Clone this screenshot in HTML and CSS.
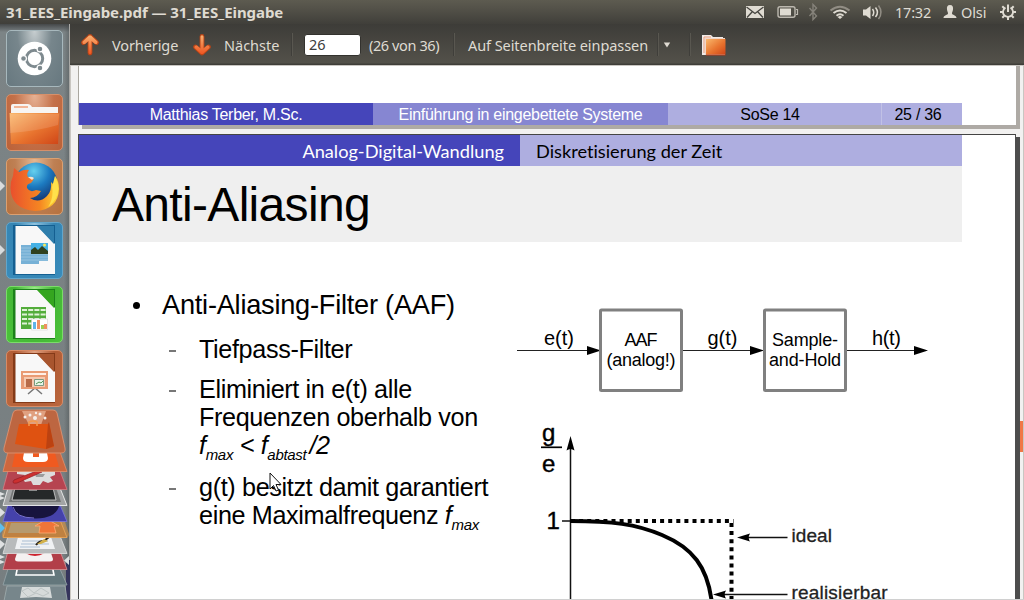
FILE: index.html
```html
<!DOCTYPE html>
<html lang="de">
<head>
<meta charset="utf-8">
<title>31_EES_Eingabe.pdf — 31_EES_Eingabe</title>
<link rel="stylesheet" href="styles.css">
</head>
<body>
<header class="panel">
  <span class="panel-title">31_EES_Eingabe.pdf — 31_EES_Eingabe</span>
  <svg class="tray" width="164" height="24" viewBox="740 0 164 24">
    <rect x="746" y="6" width="18" height="12" fill="#dfdbd2"/>
    <path d="M746.5 7l8.500 6.500L763.500 7M747 17.500l5.500-6M763 17.500l-5.500-6" fill="none" stroke="#45443f" stroke-width="1.300"/>
    <rect x="778" y="6.700" width="17" height="10.600" rx="2" fill="none" stroke="#bcb8af" stroke-width="1.400"/>
    <rect x="780" y="8.500" width="11" height="7" fill="#dfdbd2"/>
    <path d="M796 9.500h1.500v5H796" fill="none" stroke="#bcb8af" stroke-width="1.200"/>
    <path d="M809.500 8l7 8-3.500 3.500v-15l3.500 3.500-7 8" fill="none" stroke="#85827a" stroke-width="1.400"/>
    <g fill="none" stroke-width="2">
      <path d="M830.500 10.500q9.500-7.500 19 0" stroke="#918d84"/>
      <path d="M833.500 13q6.500-5 13 0M836.500 15.700q3.500-2.800 7 0" stroke="#dfdbd2"/>
    </g>
    <path d="M837.500 17l2.500-1.300 2.500 1.300-2.500 2z" fill="#dfdbd2"/>
    <path d="M863 9.500h3l4.500-3.500v13l-4.500-3.500h-3z" fill="#dfdbd2"/>
    <g fill="none" stroke="#dfdbd2" stroke-width="1.500">
      <path d="M872.500 9q2.500 3.500 0 7M875.500 7.500q4 5 0 9.500"/>
      <path d="M878.500 5.500q5 7 0 13.500" stroke="#918d84"/>
    </g>
  </svg>
  <span class="clock">17:32</span>
  <svg class="person" width="14" height="14" viewBox="0 0 14 14"><path d="M7 0C4.500 0 3.600 2 4 4.500c.2 1.800 1 2.800 1 4C5 10 .5 10 .5 13h13c0-3-4.500-3-4.500-4.500 0-1.200.8-2.200 1-4C10.400 2 9.500 0 7 0z" fill="#dfdbd2"/></svg>
  <span class="user">Olsi</span>
  <svg class="gear" width="16" height="16" viewBox="-8 -8 16 16" fill="none" stroke="#dfdbd2">
    <path d="M-2.500-4.400A5 5 0 1 0 2.500-4.400" stroke-width="1.800"/>
    <path d="M0-7.500V0" stroke-width="2"/>
    <path d="M-8 0h3M8 0h-3M0 8V5M-5.700-5.700l2 2M5.700-5.700l-2 2M-5.700 5.700l2-2M5.700 5.700l-2-2" stroke-width="2"/>
  </svg>
</header>
<div class="workspace">
  <nav class="launcher">
    <div class="tile dash">
      <svg width="57" height="57" viewBox="0 0 57 57"><circle cx="28.500" cy="28.500" r="16.800" fill="#fff"/><circle cx="28.500" cy="28.500" r="8.200" fill="none" stroke="#7e8a8f" stroke-width="3"/><g fill="#7e8a8f" stroke="#fff" stroke-width="1.200"><circle cx="17.500" cy="28.500" r="2.900"/><circle cx="34" cy="19" r="2.900"/><circle cx="34" cy="38" r="2.900"/></g></svg>
    </div>
    <div class="tile files">
      <svg width="57" height="57" viewBox="0 0 57 57"><defs><linearGradient id="fold" x2="1" y2="1"><stop offset="0" stop-color="#fab86c"/><stop offset=".55" stop-color="#e8742f"/><stop offset="1" stop-color="#cf4517"/></linearGradient></defs><path d="M5 12q0-2 2-2h15q2 0 3 1.500l1 1.500h26v8H5z" fill="#f7f5f2"/><path d="M8 13h14" stroke="#f0a078" stroke-width="1.500"/><path d="M3.500 19h50L52 50H5z" fill="url(#fold)"/><path d="M4 20l49 0-1 11q-20 6-48 8z" fill="#fff" opacity=".13"/></svg>
    </div>
    <div class="tile firefox">
      <svg width="57" height="57" viewBox="0 0 57 57"><defs><radialGradient id="globe" cx=".45" cy=".2" r=".8"><stop offset="0" stop-color="#65d0ee"/><stop offset=".45" stop-color="#1c7ac0"/><stop offset="1" stop-color="#102460"/></radialGradient><linearGradient id="fox" x2="1"><stop offset="0" stop-color="#e9502d"/><stop offset=".6" stop-color="#f58522"/><stop offset="1" stop-color="#ffdd35"/></linearGradient></defs><circle cx="30" cy="26" r="21.500" fill="url(#globe)"/><path d="M7 18L8 10l5 4q5-3 10-2-3 4-1 7l6 2-3 4q-5 1-4 5 3 5 9 2l5 1q-4 7-11 7 9 6 17-2 5-5 4-14l3 3 1-9q4 5 4 13-1 21-24 22Q5 51 4.500 30q0-7 2.500-12z" fill="url(#fox)"/><path d="M49 18q9 19-7 31 6-9 4-20z" fill="#ffe04c"/><path d="M22 19q4-1 6 1l-2 2z" fill="#f6e3cf"/></svg>
    </div>
    <div class="tile writer">
      <svg width="57" height="57" viewBox="0 0 57 57"><path d="M7 3h42v50H7z" fill="#145f91"/><path d="M9.500 4h22L49 22v30H9.500z" fill="#f8f8f8"/><path d="M31 4h17v18z" fill="#2f7eac"/><path d="M15 23h10v19H15zM25 31h17v8h-9v3H25z" fill="#77b1d6"/><path d="M15 26h27M15 29h27M15 32h27M15 35h27M15 38h27" stroke="#a6cde5" stroke-width=".7"/><path d="M25 21h17v11H25z" fill="#45b1e5"/><path d="M25 32v-4l4-3 3 3 4-4 6 5v3z" fill="#30411f"/><circle cx="38.500" cy="23" r="1.500" fill="#f9e75c"/></svg>
    </div>
    <div class="tile calc">
      <svg width="57" height="57" viewBox="0 0 57 57"><path d="M7 3h42v50H7z" fill="#1c811a"/><path d="M9.500 4h22L49 22v30H9.500z" fill="#f8f8f8"/><path d="M31 4h17v18z" fill="#35a51f"/><path d="M15 21h25v22H15z" fill="#53ad3b"/><path d="M16 24h24M16 28.500h24M16 33h24M16 37.500h24" stroke="#dff2d7" stroke-width="2" stroke-dasharray="5 1.200"/><path d="M25.500 33h16v11h-16z" fill="#fff" stroke="#ccc" stroke-width=".5"/><path d="M27 43v-7h3v7z" fill="#60b4e8"/><path d="M31 43v-9h3v9zM38 43v-5h3v5z" fill="#ef9060"/><path d="M35 43v-4h3v4z" fill="#9bcf50"/></svg>
    </div>
    <div class="tile impress">
      <svg width="57" height="57" viewBox="0 0 57 57"><path d="M7 3h42v50H7z" fill="#843a18"/><path d="M9.500 4h22L49 22v30H9.500z" fill="#f8f8f8"/><path d="M31 4h17v18z" fill="#a8552e"/><path d="M22 44l7-6 7 6" fill="none" stroke="#777" stroke-width="1.500"/><path d="M15 21h27v18H15z" fill="#e99b74"/><path d="M17 23h23v2H17z" fill="#fff0e7"/><path d="M18 27h21v10H18z" fill="#f6c9af"/><path d="M20 29h6v8h-6z" fill="#b86b48"/><path d="M28.500 29.500h9v6h-9z" fill="#e8f5e8" stroke="#7b9a83"/><path d="M30 34l3-2 2 1 2-2" fill="none" stroke="#539653"/></svg>
    </div>
    <svg class="folded" width="70" height="191" viewBox="0 409 70 191">
      <path d="M66 560h4v40h-4z" fill="#35355c"/>
      <path d="M7 586h58l3 20H3z" fill="#77868b" stroke="#a1adaf" stroke-width=".8"/>
      <path d="M22 587h28l2 11-16-1-16 1z" fill="#d6dada"/><path d="M22 591l6-3 6 5 7-5 8 5-6 3-7-3-8 4z" fill="none" stroke="#bcc3c3"/>
      <path d="M8 569h52l7 16H3z" fill="#64777c" stroke="#98a6a9" stroke-width=".8"/>
      <path d="M19 560l-3 15h38l-3-15" fill="#667479" stroke="#fff" stroke-width="1.600"/>
      <path d="M8 551h52l7 18.500H3z" fill="#b23f49" stroke="#dc8f94" stroke-width=".8"/>
      <path d="M17 553h34l2 6q0 2.500-3 2.500H18q-3 0-3-2.500z" fill="#f5f1f1"/><path d="M26 552.500q9 5 18 0" fill="none" stroke="#cd2430" stroke-width="2"/>
      <path d="M8 536h52l7 17.500H3z" fill="#b8bbbc" stroke="#e0e1e1" stroke-width=".8"/>
      <path d="M18 537h33l4 12H15z" fill="#f0f2f4"/><path d="M22 541h26M21 544h28M20 547h20" stroke="#a9bdd2"/><path d="M36 545q3-4 8-4l5-4" fill="none" stroke="#29231b" stroke-width="2"/><path d="M37 544l7-5 4 2-7 3z" fill="#d3b24b"/>
      <path d="M6 519h58l5 15q0 4-5 4H6q-5 0-4-4z" fill="#e39338" opacity=".55"/>
      <path d="M8 520h52l7 17.500H3z" fill="#bf8141" stroke="#efa758" stroke-width=".8"/>
      <path d="M11 523h32l2 10H8z" fill="#b69a6f"/><path d="M47 519l12 7h-5l2 7H39l1-7h-5z" fill="#ef7538" stroke="#ffad74" stroke-width=".8"/>
      <path d="M8 505h52l7 16.500H3z" fill="#4542aa" stroke="#7774df" stroke-width=".8"/>
      <path d="M12 506h47q-3 12-23 12.500Q15 518 12 506z" fill="#17143e"/><path d="M13 507q3 11 21 11" fill="none" stroke="#7770ca"/>
      <path d="M8 488h52l7 17.500H3z" fill="#a2a4a5" stroke="#eee" stroke-width=".9"/>
      <path d="M13 488h43l5 14H9z" fill="#737575"/><path d="M15 488h38l3 12H12z" fill="#252829" stroke="#d5d5d5" stroke-width=".8"/><path d="M29 490h8" stroke="#eee"/>
      <path d="M8 471h52l7 18.500H3z" fill="#b64450" stroke="#d87c83" stroke-width=".8"/>
      <path d="M17 471h38v4l-5 2 3 4-5 2-5-2-3 4h-7l-2-4-6 1-3-4 3-3-8-1z" fill="#ddd"/><path d="M35 474h10l-2 3h-7z" fill="#9a9c9d"/><path d="M14 480l25-10 3 2-25 11q-6 1-3-3z" fill="#cc3030" stroke="#901c23" stroke-width=".7"/>
      <path d="M8 452h52l7 19.500H3z" fill="#ce673e" stroke="#e58e68" stroke-width=".8"/>
      <path d="M15 453h40l4 14H12z" fill="#f05a20"/><path d="M24 453l-1 5q0 4 5 4h15q5 0 5-4l-1-5h-8v4h-6v-4z" fill="#fff"/>
      <path d="M17 410h36q3 0 4 3l8 35q1 5-4 5H8q-5 0-4-5l9-35q1-3 4-3z" fill="#bd6641" stroke="#dc9270" stroke-width=".9"/>
      <path d="M22 411h24l-5 14H29z" fill="#f6c6aa" opacity=".6"/><g fill="#f5eee9"><circle cx="25" cy="417" r="1.500"/><circle cx="30" cy="415" r="1.500"/><circle cx="35" cy="418" r="2"/><circle cx="40" cy="414" r="1.500"/><circle cx="45" cy="418" r="1.500"/><circle cx="36" cy="413" r="1.200"/></g>
      <path d="M19 424l30 0 5 23-8 2-31-5z" fill="#df5211"/><path d="M49 422l5 24-8 3 2-25z" fill="#bc4211"/><path d="M29 426v-4q4-2 8 0v4" fill="none" stroke="#f39b50" stroke-width="1.500"/>
      <g fill="#dfe1e2"><path d="M0 492l5 2-5 2zM0 496l5 2-5 2zM0 508l5 4.500-5 4.500zM0 540l5 4-5 5zM0 555l5 2-5 2zM0 560l5 2-5 2zM69 556l-5 4.500 5 4.500z"/></g><path d="M0 523l5 5-5 5z" fill="#5fbdec"/>
    </svg>
  </nav>
  <main class="viewer">
    <div class="toolbar">
      <svg class="arrow" width="20" height="24" viewBox="0 0 20 24"><defs><linearGradient id="arr" x2="0" y2="1"><stop offset="0" stop-color="#f9b070"/><stop offset="1" stop-color="#ee5521"/></linearGradient></defs><path d="M10 3.500V20M3.500 9.500L10 3.500l6.500 6" fill="none" stroke="#b84417" stroke-width="4.800" stroke-linecap="round" stroke-linejoin="round"/><path d="M9 2.500L2.500 8.500q-.5 3 2.500 2.500l3.500-3v12q1.500 2.500 3 0V8l3.500 3q3 .5 2.500-2.500L11 2.500z" fill="url(#arr)"/></svg>
      <span class="label prev">Vorherige</span>
      <svg class="arrow down" width="20" height="24" viewBox="0 0 20 24"><path d="M10 3.500V20M3.500 14L10 20l6.500-6" fill="none" stroke="#b84417" stroke-width="4.800" stroke-linecap="round" stroke-linejoin="round"/><path d="M9 21L2.500 15q-.5-3 2.500-2.500l3.500 3v-12q1.500-2.500 3 0v12l3.500-3q3-.5 2.500 2.500L11 21z" fill="url(#arr)"/></svg>
      <span class="label next">Nächste</span>
      <i class="sep sep-a"></i>
      <span class="page-field">26</span>
      <span class="label count">(26 von 36)</span>
      <i class="sep sep-b"></i>
      <span class="label fit">Auf Seitenbreite einpassen</span>
      <i class="sep sep-c"></i>
      <svg class="caret" width="8" height="6" viewBox="0 0 8 6"><path d="M.8.500h6.400L4 5.500z" fill="#dfdbd2"/></svg>
      <i class="sep sep-d"></i>
      <svg class="folder" width="26" height="24" viewBox="0 0 26 24"><path d="M1 22V2h9l2 2h10v3H6v15z" fill="#f1ebe8"/><path d="M3 20V4h7" fill="none" stroke="#eb9c7c"/><path d="M4 5h20v17H4z" fill="#efd6c9"/><path d="M5 6h19.500v15.500H5z" fill="url(#fold)"/><path d="M5 22h19.500" stroke="#b93a18"/></svg>
    </div>
    <div class="document">
      <div class="pages">
        <section class="page previous">
          <footer class="slide-foot">
            <span class="author">Matthias Terber, M.Sc.</span>
            <span class="course">Einführung in eingebettete Systeme</span>
            <span class="term">SoSe 14</span>
            <span class="number">25 / 36</span>
          </footer>
        </section>
        <section class="page current">
          <div class="slide-head"><span class="topic">Analog-Digital-Wandlung</span><span class="subtopic">Diskretisierung der Zeit</span></div>
          <h1 class="slide-title">Anti-Aliasing</h1>
          <div class="slide-body">
            <div class="text-column">
              <p class="point"><i class="dot"></i>Anti-Aliasing-Filter (AAF)</p>
              <ul class="points">
                <li class="sub tief">Tiefpass-Filter</li>
                <li class="sub elim">Eliminiert in e(t) alle<br><span class="freq">Frequenzen oberhalb von</span><br><em>f<small>max</small> &lt; f<small>abtast</small><span class="half">/2</span></em></li>
                <li class="sub gt">g(t) besitzt damit garantiert<br>eine Maximalfrequenz <em>f<small>max</small></em></li>
              </ul>
            </div>
            <svg class="figure" width="500" height="358" viewBox="515 242 500 358">
              <g stroke="#222" stroke-width="1.200"><path d="M517 350.500h72M682 350.500h70M846 350.500h70"/></g>
              <path d="M587 346l14 4.500-14 4.500zM750 346l14 4.500-14 4.500zM914 346l14 4.500-14 4.500z"/>
              <g fill="#fff" stroke="#808080" stroke-width="3"><rect x="600.500" y="310" width="81" height="80.500" rx="1"/><rect x="764.500" y="310" width="81" height="80.500" rx="1"/></g>
              <g font-size="20"><text x="544" y="345" textLength="30">e(t)</text><text x="707.500" y="345" textLength="30">g(t)</text><text x="872" y="345" textLength="29">h(t)</text></g>
              <g font-size="18"><text x="624.500" y="346" textLength="33">AAF</text><text x="606.500" y="366" textLength="69">(analog!)</text><text x="772" y="346" textLength="66">Sample-</text><text x="769" y="366" textLength="72">and-Hold</text></g>
              <g font-size="24" stroke="#000" stroke-width=".4"><text x="542" y="441">g</text><text x="542" y="472">e</text><text x="546.500" y="529">1</text></g>
              <path d="M541 447.300h21" stroke="#000" stroke-width="1.700"/>
              <path d="M570.500 600V448M562 521h9" stroke="#111" stroke-width="1.500"/>
              <path d="M570.500 436l4 14.500q-4-3-8 0z"/>
              <path d="M571 521h162.500M731.500 523v78" fill="none" stroke="#000" stroke-width="4" stroke-dasharray="4 4.100"/>
              <path d="M570 521C612 521 636 524 662 535C693 548 707 567 711.500 600" fill="none" stroke="#000" stroke-width="4"/>
              <path d="M747 537.500h40.500M724 594.500h63.500" stroke="#111" stroke-width="1.500"/>
              <path d="M737 537.500l13-4q-2.500 4 0 8zM713 594.500l13-4q-2.500 4 0 8z"/>
              <g font-size="19" fill="#222" stroke="#222" stroke-width=".3"><text x="791.500" y="541.500" textLength="40.500">ideal</text><text x="791.500" y="598.500" textLength="96">realisierbar</text></g>
            </svg>
          </div>
        </section>
      </div>
      <div class="scroll"><i class="thumb"></i></div>
    </div>
  </main>
</div>
<svg class="pointer" width="14" height="20" viewBox="0 0 14 20"><path d="M1 1v16l3.500-3.500 2.500 5.500 2.500-1-2.500-5.500h5z" fill="#fff" stroke="#111"/></svg>
<i class="mark mark-a"></i><i class="mark mark-b"></i>
</body>
</html>
```
FILE: styles.css
```css
* { box-sizing: border-box; }
body { margin: 0; width: 1024px; height: 600px; overflow: hidden; background: #f2f1f0; font-family: "Liberation Sans", Arial, sans-serif; }
svg { display: block; flex: none; }
.panel { height: 24px; display: flex; align-items: center; padding-left: 6px; color: #dfdbd2; background: linear-gradient(#5d5b50, #55534a 30%, #403f3a); font: 14.5px/24px "Noto Sans", sans-serif; white-space: nowrap; }
.panel-title { width: 734px; font-size: 15px; font-weight: 700; letter-spacing: -.08px; }
.clock { width: 39px; margin-left: -9px; letter-spacing: -.2px; }
.person { margin-left: 9px; }
.user { width: 29px; margin-left: 4px; letter-spacing: -.1px; }
.gear { margin-left: 10px; }
.workspace { height: 576px; display: flex; }
.launcher { width: 70px; flex: none; display: flex; flex-direction: column; align-items: flex-start; gap: 7px; padding-top: 6px; background: linear-gradient(90deg, transparent 64px, rgba(60,65,66,.35) 69px, #a9a9a6 69px), linear-gradient(#454849, #7c8486 8px, #777e80); }
.tile { width: 57px; height: 57px; margin-left: 6px; border-radius: 5px; flex: none; border: 1px solid rgba(255,255,255,.3); }
.tile svg { margin: -1px; }
.dash { background: radial-gradient(ellipse at 50% 0, #c7ced0, #77868c 45%, #67787f); border-color: #a7b8bd; }
.files { background: radial-gradient(ellipse at 50% 0, #e7b294, #c4714a 50%, #bb6137); border-color: #d7906a; }
.firefox { background: radial-gradient(ellipse at 50% 0, #e5b792, #be8054 50%, #b6713e); border-color: #dba071; }
.writer { background: radial-gradient(ellipse at 50% 0, #91c3df, #3584b2 50%, #398cbb); border-color: #62a6cb; }
.calc { background: radial-gradient(ellipse at 50% 0, #9be889, #43b435 50%, #4bc43a); border-color: #7bdd69; }
.impress { background: radial-gradient(ellipse at 50% 0, #dfa182, #b15c35 50%, #bb673e); border-color: #d78b66; }
.folded { margin-top: -5px; }
.viewer { width: 954px; display: flex; flex-direction: column; }
.toolbar { height: 41px; flex: none; display: flex; align-items: center; padding-left: 10px; color: #dfdbd2; background: linear-gradient(#3d3c38, #53514a 39px, #3f3e39 40px); font: 14.5px/40px "Noto Sans", sans-serif; white-space: nowrap; }
.label { flex: none; }
.prev { width: 70px; margin-left: 12px; letter-spacing: -.1px; }
.down { margin-left: 10px; }
.next { width: 67px; margin-left: 12px; }
.sep { width: 1px; height: 23px; background: #3f3e3a; box-shadow: 1px 0 #595750; flex: none; }
.page-field { width: 57px; height: 22px; margin-left: 12px; padding-left: 4px; border-radius: 3px; border: 1px solid #33322e; background: #fff; color: #3c3c3c; line-height: 19px; flex: none; }
.count { width: 84px; margin-left: 8px; letter-spacing: -.4px; }
.fit { width: 189px; margin-left: 14px; letter-spacing: -.07px; }
.caret { margin-left: 5px; }
.sep-d { margin-left: 18px; }
.folder { margin-left: 11px; }
.document { height: 535px; display: flex; background: #f2f1f0; border-left: 1px solid #c9c6c1; border-top: 1px solid #c9c6c1; border-bottom: 1px solid #d0d0d0; overflow: hidden; }
.pages { width: 949px; padding-left: 7px; }
.page { width: 938px; background: #fff; }
.previous { height: 59px; padding-top: 37px; border-left: 1px solid #aaa7a0; box-shadow: 4px 4px #aeaaa5, 4px 0 #aeaaa5; }
.slide-foot { display: flex; width: 883px; height: 22px; font-size: 16px; letter-spacing: -.28px; line-height: 24px; text-align: center; white-space: nowrap; }
.author { width: 294px; background: #4545ba; color: #fff; }
.course { width: 295px; background: #8686d2; color: #fff; }
.term { width: 213px; background: #aeaee0; padding-right: 9px; }
.number { width: 81px; background: #aeaee0; border-left: 1px solid #c1c1e5; padding-right: 8px; }
.current { height: 470px; margin-top: 9px; border: 1px solid #444; border-right-color: #4d4d4d; box-shadow: 4px 3px #4d4d4d; }
.slide-head { width: 883px; height: 31px; display: flex; font: 18.200px/33px Lato, sans-serif; font-variant-ligatures: none; white-space: nowrap; }
.topic { width: 441px; padding-right: 16px; text-align: right; color: #fff; background: #4545ba; }
.subtopic { width: 442px; padding-left: 16px; background: #aeaee0; }
.slide-title { width: 883px; height: 76px; margin: 0; padding-left: 33px; background: #efefef; font-size: 48px; letter-spacing: -.68px; font-weight: 400; line-height: 78px; }
.slide-body { display: flex; }
.text-column { width: 436px; padding: 47px 0 0 53px; flex: none; white-space: nowrap; }
.point { margin: 0; display: flex; align-items: center; font-size: 27.200px; letter-spacing: -.24px; line-height: 32px; }
.dot { width: 7px; height: 7px; border-radius: 50%; background: #000; margin: 0 22px 0 1px; }
.points { margin: 0; padding: 0 0 0 37px; list-style: none; font-size: 25.200px; letter-spacing: -.36px; line-height: 28px; }
.sub { padding-left: 30px; background: linear-gradient(#777, #777) 0 15px / 7px 2px no-repeat; }
.tief { margin-top: 14px; }
.elim { margin-top: 12px; }
.gt { margin-top: 14px; }
.sub small { font-size: 15px; letter-spacing: -.3px; line-height: 0; position: relative; top: 6px; }
.half { margin-left: 3px; }
.figure text { font-family: "Liberation Sans", Arial, sans-serif; }
.scroll { width: 4px; padding-top: 355px; border-right: 1px solid #c9c6c1; }
.thumb { display: block; width: 3px; height: 31px; background: #f07746; }
.pointer { position: absolute; left: 269px; top: 472px; }
.mark { position: absolute; left: 0; border: 5px solid transparent; border-left-color: #d9dcdd; border-right: 0; }
.mark-a { top: 181px; }
.mark-b { top: 245px; }
```
